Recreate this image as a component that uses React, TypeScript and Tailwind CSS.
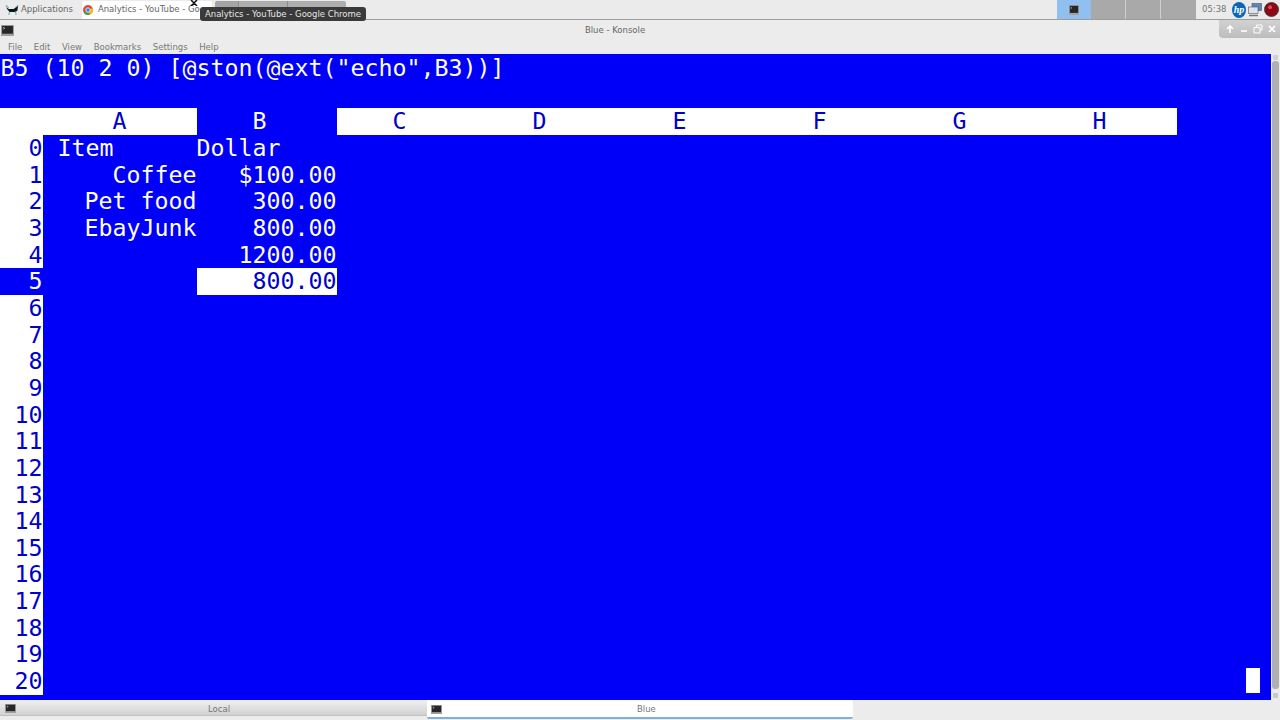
import { ReactNode } from 'react'

const rows: { a?: string; aLeft?: boolean; b?: string; bLeft?: boolean }[] = [
  { a: 'Item', aLeft: true, b: 'Dollar', bLeft: true },
  { a: 'Coffee', b: '$100.00' },
  { a: 'Pet food', b: '300.00' },
  { a: 'EbayJunk', b: '800.00' },
  { b: '1200.00' },
  { b: '800.00' },
  {}, {}, {}, {}, {}, {}, {}, {}, {}, {}, {}, {}, {}, {}, {},
]

function TermIcon({ className }: { className: string }) {
  return (
    <svg viewBox="0 0 12 12" className={className} preserveAspectRatio="none">
      <rect x="0" y="0" width="12" height="12" fill="#a0a0a0" />
      <rect x="1" y="1" width="10" height="8.5" fill="#262626" />
      <path d="M2 2.5l1.5 1-1.5 1" stroke="#ddd" strokeWidth="0.7" fill="none" />
    </svg>
  )
}

function Cell({ w, left, children }: { w: string; left?: boolean; children?: ReactNode }) {
  return <div className={`${w} shrink-0 whitespace-pre ${left ? 'text-left' : 'text-right'}`}>{children}</div>
}

export default function App() {
  return (
    <div className="w-[1280px] h-[720px] overflow-hidden flex flex-col bg-[#ececec] font-['DejaVu_Sans',sans-serif] relative">
      {/* top panel */}
      <div className="h-[20px] shrink-0 flex items-center bg-[#ebebeb] border-b border-[#9c9c9c] text-[8.5px] text-[#666]">
        <svg viewBox="0 0 16 12" className="w-[15px] h-[12px] ml-[5px] mr-[1px]">
          <path d="M1 1l3 3M14 1l-3 3M4 11l1-3M12 11l-1-3" stroke="#6fb4c8" strokeWidth="1.4" />
          <path d="M1 3l3 2h5l5-3-1 5-3 1H5L3 6z" fill="#141414" />
        </svg>
        <span>Applications</span>
        <div className="ml-[9px] w-[130px] h-[18px] bg-white rounded-t-[2px] flex items-center">
          <svg viewBox="0 0 10 10" className="w-[10px] h-[10px] ml-[1px] mr-[5px]">
            <circle cx="5" cy="5" r="5" fill="#dd4b39" />
            <path d="M5 5L1 8a5 5 0 0 0 6 1.6z" fill="#3aa757" />
            <path d="M5 5l4.6-2A5 5 0 0 1 7 9.6z" fill="#fbbc05" />
            <circle cx="5" cy="5" r="2.2" fill="#4285f4" stroke="#fff" strokeWidth="0.7" />
          </svg>
          <span className="whitespace-nowrap overflow-hidden">Analytics - YouTube - Go</span>
        </div>
        <div className="ml-[3px] h-[18px] flex">
          <div className="w-[23px] bg-[#a4a4a4] rounded-l-[2px]" />
          <div className="w-[49px] bg-[#adadad] border-l border-[#8c8c8c]" />
          <div className="w-[59px] bg-[#adadad] border-l border-[#8c8c8c] rounded-r-[2px]" />
        </div>
        <div className="ml-auto flex items-center h-full">
          <div className="w-[34px] h-[19px] bg-[#8fc0f0] flex items-center justify-center">
            <TermIcon className="w-[10px] h-[10px]" />
          </div>
          <div className="w-[35px] h-[19px] bg-[#a9a9a9] border-r border-[#d0d0d0]" />
          <div className="w-[35px] h-[19px] bg-[#a9a9a9] border-r border-[#d0d0d0]" />
          <div className="w-[35px] h-[19px] bg-[#a9a9a9]" />
          <span className="ml-[6px] mr-[5px] w-[25px] text-[#777]">05:38</span>
          <svg viewBox="0 0 14 16" className="w-[14px] h-[16px]">
            <ellipse cx="7" cy="8" rx="7" ry="8" fill="#0a66b8" />
            <text x="7" y="11" textAnchor="middle" fontSize="10" fontStyle="italic" fontWeight="bold" fontFamily="'Liberation Serif',serif" fill="#fff">hp</text>
          </svg>
          <svg viewBox="0 0 14 14" className="w-[14px] h-[14px] ml-[2px]">
            <rect x="4" y="0.5" width="9.5" height="7" fill="#5b86b8" stroke="#555" strokeWidth="0.6" />
            <rect x="0.5" y="4" width="9.5" height="6.5" fill="#d8e4f0" stroke="#555" strokeWidth="0.6" />
            <path d="M1 12.5h9" stroke="#777" strokeWidth="1.5" />
          </svg>
          <svg viewBox="0 0 16 16" className="w-[15px] h-[15px] ml-[2px] mr-[1px]">
            <circle cx="8" cy="8" r="7.5" fill="#8c0a14" stroke="#333" strokeWidth="0.8" />
            <circle cx="6.5" cy="5.5" r="2" fill="#e85060" />
          </svg>
        </div>
      </div>

      {/* window titlebar + menu */}
      <div className="h-[34px] shrink-0 flex flex-col bg-[#ececec] relative">
        <div className="h-[20px] pt-[1px] pr-[50px] flex items-center justify-center text-[8.5px] text-[#666] relative">
          <TermIcon className="absolute left-[1px] top-[5px] w-[13px] h-[11px]" />
          <span>Blue - Konsole</span>
          <div className="absolute right-0 top-0 w-[61px] h-[18px] bg-[linear-gradient(#d2d2d2,#bdbdbd)] rounded-bl-[4px] flex items-center justify-between pl-[6px] pr-[3px]">
            <svg viewBox="0 0 10 10" className="w-[10px] h-[10px]">
              <path d="M5 9V2M2 5l3-3 3 3" stroke="#fff" strokeWidth="1.6" fill="none" />
            </svg>
            <svg viewBox="0 0 10 10" className="w-[10px] h-[10px]">
              <path d="M2 7h6" stroke="#fff" strokeWidth="1.6" />
            </svg>
            <svg viewBox="0 0 10 10" className="w-[10px] h-[10px]">
              <path d="M3.5 3V1h5.5v5H7M1 3.5h6v5.5H1z" stroke="#fff" strokeWidth="1" fill="none" />
            </svg>
            <svg viewBox="0 0 10 10" className="w-[10px] h-[10px]">
              <path d="M2 2l6 6M8 2l-6 6" stroke="#fff" strokeWidth="1.6" />
            </svg>
          </div>
        </div>
        <div className="h-[14px] pt-[1px] flex items-center text-[8.5px] text-[#777] gap-[11.6px] pl-[8px]">
          <span>File</span>
          <span>Edit</span>
          <span>View</span>
          <span>Bookmarks</span>
          <span>Settings</span>
          <span>Help</span>
        </div>
      </div>

      {/* terminal */}
      <div className="h-[646px] shrink-0 flex bg-[#ececec]">
        <div className="w-[1271px] pt-[1px] pl-[0.5px] bg-[#0000f8] text-white font-['DejaVu_Sans_Mono',monospace] text-[23.25px] leading-[26.67px] flex flex-col">
          <div className="h-[26.67px] whitespace-pre">B5 (10 2 0) [@ston(@ext("echo",B3))]</div>
          <div className="h-[26.67px]" />
          <div className="h-[26.67px] flex text-[#0000c8]">
            <div className="w-[196.5px] -ml-[0.5px] bg-white pl-[112.5px]">A</div>
            <div className="w-[140px] text-white pl-[56px]">B</div>
            <div className="w-[840px] bg-white grid grid-cols-6">
              {['C', 'D', 'E', 'F', 'G', 'H'].map((c) => (
                <div key={c} className="pl-[56px]">{c}</div>
              ))}
            </div>
          </div>
          {rows.map((r, i) => (
            <div key={i} className="h-[26.67px] flex relative">
              <div className={`w-[42.5px] -ml-[0.5px] shrink-0 text-right ${i === 5 ? 'text-white' : 'bg-white text-[#0000c8]'}`}>{i}</div>
              <Cell w="w-[154px]" left={r.aLeft}>
                {r.aLeft ? <span className="pl-[15px]">{r.a}</span> : r.a}
              </Cell>
              <Cell w="w-[140px]" left={r.bLeft}>
                {i === 5 ? <div className="bg-white text-[#0000c8]">{r.b}</div> : r.b}
              </Cell>
              {i === 20 && <div className="absolute left-[1245.5px] top-0 w-[14px] h-[25px] bg-white" />}
            </div>
          ))}
        </div>
        <div className="w-[9px] flex flex-col items-center bg-[#ececec]">
          <div className="w-[5px] h-[5px] mt-[1px] bg-[#d0d0d0]" />
          <div className="w-[7px] h-[628px] mt-[1px] bg-[#b0b0b0] rounded-[3px]" />
          <div className="w-[5px] h-[5px] mt-[4px] bg-[#c8c8c8]" />
        </div>
      </div>

      {/* tab bar */}
      <div className="h-[20px] shrink-0 flex items-start">
        <div className="w-[427px] h-[16px] pt-[4px] bg-[linear-gradient(#f0f0f0,#d2d2d2)] border-b border-[#c0c0c0] flex items-center relative text-[8.5px] text-[#777]">
          <TermIcon className="absolute left-[5px] top-[4px] w-[11px] h-[9px]" />
          <span className="ml-[208px]">Local</span>
        </div>
        <div className="w-[426px] h-[19px] pt-[2px] bg-white border-b-2 border-[#7db0de] rounded-b-[2px] flex items-center relative text-[8.5px] text-[#777]">
          <TermIcon className="absolute left-[4px] top-[5px] w-[11px] h-[9px]" />
          <span className="ml-[210px]">Blue</span>
        </div>
        <div className="flex-1 h-[16px]" />
      </div>

      {/* tooltip over panel */}
      <div className="absolute left-[200px] top-[7px] h-[14px] w-[166px] bg-[#3a3a3a] rounded-[3px] text-[#e6e6e6] text-[8.5px] flex items-center justify-center">
        Analytics - YouTube - Google Chrome
      </div>
      <svg viewBox="0 0 12 8" className="absolute left-[188px] top-0 w-[12px] h-[6px]">
        <path d="M2 0l4 4 4-4M2 8l4-4 4 4" stroke="#111" strokeWidth="2" fill="none" />
      </svg>
    </div>
  )
}
